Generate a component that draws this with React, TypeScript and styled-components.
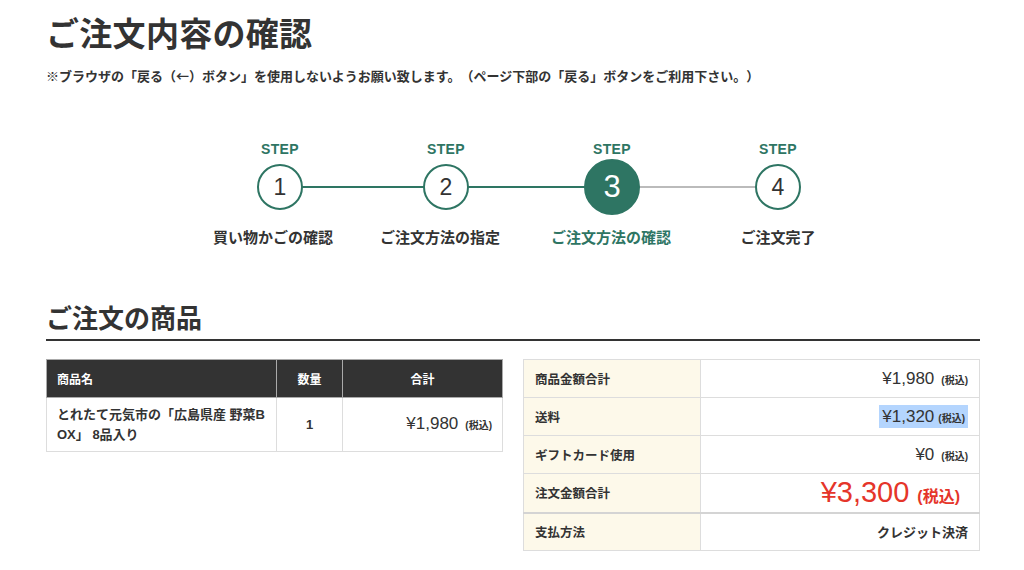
import styled, { createGlobalStyle, css } from "styled-components";

const green = "#2e7563";
const text = "#333333";
const line = "#dddddd";

const GlobalStyle = createGlobalStyle`
  html, body {
    margin: 0;
    padding: 0;
    background: #ffffff;
  }
  body {
    font-family: "Liberation Sans", "Noto Sans CJK JP", sans-serif;
    color: ${text};
    text-spacing-trim: space-all;
  }
`;

const Page = styled.div`
  width: 934px;
  padding: 0 44px 0 46px;
`;

const Title = styled.h1`
  margin: 14px 0 0;
  font-size: 33px;
  line-height: 42px;
  font-weight: 700;
  letter-spacing: 0.3px;
`;

const Notice = styled.p`
  margin: 11px 0 0;
  font-family: "Noto Sans CJK JP", sans-serif;
  font-size: 13px;
  line-height: 18px;
  font-weight: 700;
  white-space: nowrap;
`;

const Stepper = styled.ol`
  list-style: none;
  display: flex;
  margin: 56px 0 0;
  padding: 0 0 0 151px;
`;

const Step = styled.li<{ $done?: boolean; $first?: boolean }>`
  position: relative;
  width: 166px;
  display: flex;
  flex-direction: column;
  align-items: center;

  ${(p) =>
    !p.$first &&
    css`
      &::before {
        content: "";
        position: absolute;
        top: 45px;
        left: -50%;
        width: 100%;
        height: 2px;
        background: ${p.$done ? green : "#bbbbbb"};
      }
    `}
`;

const StepTag = styled.span`
  font-size: 14px;
  line-height: 16px;
  font-weight: 700;
  color: ${green};
  letter-spacing: 0.3px;
`;

const CircleRow = styled.div`
  height: 56px;
  margin-top: 2px;
  display: flex;
  align-items: center;
  justify-content: center;
  position: relative;
  z-index: 1;
`;

const Circle = styled.div<{ $current?: boolean }>`
  box-sizing: border-box;
  width: ${(p) => (p.$current ? 56 : 46)}px;
  height: ${(p) => (p.$current ? 56 : 46)}px;
  border-radius: 50%;
  border: 2px solid ${green};
  background: ${(p) => (p.$current ? green : "#ffffff")};
  color: ${(p) => (p.$current ? "#ffffff" : text)};
  font-size: ${(p) => (p.$current ? 31 : 23)}px;
  display: flex;
  align-items: center;
  justify-content: center;
`;

const StepLabel = styled.span<{ $current?: boolean; $shift: number }>`
  margin-top: 13px;
  margin-right: ${(p) => p.$shift}px;
  font-size: 15px;
  line-height: 20px;
  font-weight: 700;
  white-space: nowrap;
  color: ${(p) => (p.$current ? green : text)};
`;

const SectionTitle = styled.h2`
  margin: 56px 0 0;
  padding-bottom: 5px;
  border-bottom: 2px solid #333333;
  font-size: 26px;
  line-height: 30px;
  font-weight: 700;
`;

const Tables = styled.div`
  display: flex;
  align-items: flex-start;
  gap: 20px;
  margin-top: 18px;
`;

const ItemTable = styled.table`
  width: 456px;
  border-collapse: collapse;
  table-layout: fixed;
`;

const Head = styled.th<{ $align?: string; $w: number }>`
  width: ${(p) => p.$w}px;
  height: 38px;
  box-sizing: border-box;
  padding: 0 10px;
  background: #333333;
  color: #ffffff;
  font-size: 12px;
  font-weight: 700;
  text-align: ${(p) => p.$align || "center"};
  border: 1px solid #aaaaaa;
`;

const Cell = styled.td<{ $align?: string }>`
  height: 54px;
  box-sizing: border-box;
  padding: 6px 10px;
  border: 1px solid ${line};
  font-size: 13px;
  line-height: 20px;
  font-weight: 700;
  text-align: ${(p) => p.$align || "left"};
  vertical-align: middle;
`;

const SummaryTable = styled.table`
  width: 458px;
  border-collapse: collapse;
  table-layout: fixed;
`;

const Row = styled.tr<{ $strong?: boolean }>`
  height: ${(p) => (p.$strong ? 39 : 38)}px;
  ${(p) =>
    p.$strong &&
    css`
      border-bottom: 2px solid #d4d4d4;
    `}
`;

const Label = styled.th`
  width: 177px;
  box-sizing: border-box;
  padding: 0 11px;
  background: #fdf9ea;
  border: 1px solid ${line};
  font-size: 12.5px;
  font-weight: 700;
  text-align: left;
`;

const Value = styled.td`
  box-sizing: border-box;
  padding: 0 11px;
  border: 1px solid ${line};
  text-align: right;
  font-size: 13px;
  font-weight: 700;
`;

const Price = styled.span<{ $selected?: boolean }>`
  font-size: 17px;
  font-weight: 400;
  padding: 2px 3px;
  background: ${(p) => (p.$selected ? "#b4d5fe" : "transparent")};
`;

const Tax = styled.span`
  font-size: 10px;
  font-weight: 700;
  margin-left: 4px;
`;

const Total = styled.span`
  color: #e5352a;
  font-size: 29px;
  font-weight: 400;
`;

const TotalTax = styled.span`
  color: #e5352a;
  font-size: 16px;
  font-weight: 700;
  margin: 0 8px 0 8px;
`;

const steps = [
  { no: 1, label: "買い物かごの確認", done: true, shift: 14 },
  { no: 2, label: "ご注文方法の指定", done: true, shift: 12 },
  { no: 3, label: "ご注文方法の確認", done: true, current: true, shift: 2 },
  { no: 4, label: "ご注文完了", done: false, shift: 0 },
];

const summary = [
  { label: "商品金額合計", price: "¥1,980" },
  { label: "送料", price: "¥1,320", selected: true },
  { label: "ギフトカード使用", price: "¥0" },
];

export default function App() {
  return (
    <Page>
      <GlobalStyle />
      <Title>ご注文内容の確認</Title>
      <Notice>
        ※ブラウザの「戻る（←）ボタン」を使用しないようお願い致します。（ページ下部の「戻る」ボタンをご利用下さい。）
      </Notice>

      <Stepper>
        {steps.map((s, i) => (
          <Step key={s.no} $first={i === 0} $done={s.done}>
            <StepTag>STEP</StepTag>
            <CircleRow>
              <Circle $current={s.current}>{s.no}</Circle>
            </CircleRow>
            <StepLabel $current={s.current} $shift={s.shift}>
              {s.label}
            </StepLabel>
          </Step>
        ))}
      </Stepper>

      <SectionTitle>ご注文の商品</SectionTitle>

      <Tables>
        <ItemTable>
          <thead>
            <tr>
              <Head $w={230} $align="left">商品名</Head>
              <Head $w={66}>数量</Head>
              <Head $w={160}>合計</Head>
            </tr>
          </thead>
          <tbody>
            <tr>
              <Cell>
                とれたて元気市の「広島県産 野菜B
                <br />
                OX」 8品入り
              </Cell>
              <Cell $align="center">1</Cell>
              <Cell $align="right">
                <Price>¥1,980</Price>
                <Tax>(税込)</Tax>
              </Cell>
            </tr>
          </tbody>
        </ItemTable>

        <SummaryTable>
          <tbody>
            {summary.map((r) => (
              <Row key={r.label}>
                <Label>{r.label}</Label>
                <Value>
                  <Price $selected={r.selected}>
                    {r.price}
                    {r.selected ? <Tax>(税込)</Tax> : null}
                  </Price>
                  {r.selected ? null : <Tax>(税込)</Tax>}
                </Value>
              </Row>
            ))}
            <Row $strong>
              <Label>注文金額合計</Label>
              <Value>
                <Total>¥3,300</Total>
                <TotalTax>(税込)</TotalTax>
              </Value>
            </Row>
            <Row>
              <Label>支払方法</Label>
              <Value>クレジット決済</Value>
            </Row>
          </tbody>
        </SummaryTable>
      </Tables>
    </Page>
  );
}
